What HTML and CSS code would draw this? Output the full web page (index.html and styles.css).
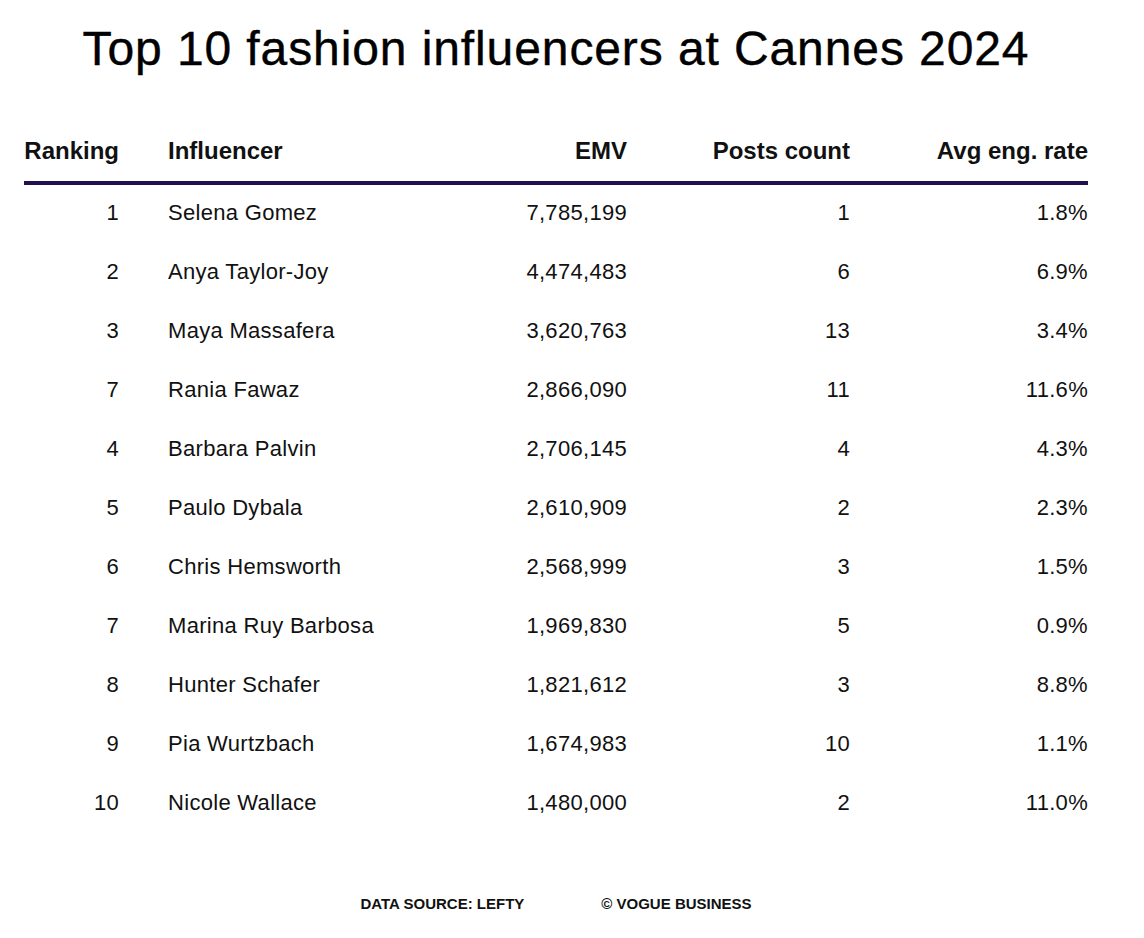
FILE: index.html
```html
<!DOCTYPE html>
<html lang="en">
<head>
<meta charset="utf-8">
<title>Top 10 fashion influencers at Cannes 2024</title>
<link rel="stylesheet" href="styles.css">
</head>
<body>
<div class="page">
  <h1 class="title">Top 10 fashion influencers at Cannes 2024</h1>
  <div class="table">
    <div class="row head">
      <div class="c rank">Ranking</div>
      <div class="c name">Influencer</div>
      <div class="c num">EMV</div>
      <div class="c num">Posts count</div>
      <div class="c num">Avg eng. rate</div>
    </div>
    <div class="body">
      <div class="row"><div class="c rank">1</div><div class="c name">Selena Gomez</div><div class="c num">7,785,199</div><div class="c num">1</div><div class="c num">1.8%</div></div>
      <div class="row"><div class="c rank">2</div><div class="c name">Anya Taylor-Joy</div><div class="c num">4,474,483</div><div class="c num">6</div><div class="c num">6.9%</div></div>
      <div class="row"><div class="c rank">3</div><div class="c name">Maya Massafera</div><div class="c num">3,620,763</div><div class="c num">13</div><div class="c num">3.4%</div></div>
      <div class="row"><div class="c rank">7</div><div class="c name">Rania Fawaz</div><div class="c num">2,866,090</div><div class="c num">11</div><div class="c num">11.6%</div></div>
      <div class="row"><div class="c rank">4</div><div class="c name">Barbara Palvin</div><div class="c num">2,706,145</div><div class="c num">4</div><div class="c num">4.3%</div></div>
      <div class="row"><div class="c rank">5</div><div class="c name">Paulo Dybala</div><div class="c num">2,610,909</div><div class="c num">2</div><div class="c num">2.3%</div></div>
      <div class="row"><div class="c rank">6</div><div class="c name">Chris Hemsworth</div><div class="c num">2,568,999</div><div class="c num">3</div><div class="c num">1.5%</div></div>
      <div class="row"><div class="c rank">7</div><div class="c name">Marina Ruy Barbosa</div><div class="c num">1,969,830</div><div class="c num">5</div><div class="c num">0.9%</div></div>
      <div class="row"><div class="c rank">8</div><div class="c name">Hunter Schafer</div><div class="c num">1,821,612</div><div class="c num">3</div><div class="c num">8.8%</div></div>
      <div class="row"><div class="c rank">9</div><div class="c name">Pia Wurtzbach</div><div class="c num">1,674,983</div><div class="c num">10</div><div class="c num">1.1%</div></div>
      <div class="row"><div class="c rank">10</div><div class="c name">Nicole Wallace</div><div class="c num">1,480,000</div><div class="c num">2</div><div class="c num">11.0%</div></div>
    </div>
  </div>
  <div class="footer">
    <span>DATA SOURCE: LEFTY</span>
    <span>© VOGUE BUSINESS</span>
  </div>
</div>
</body>
</html>
```
FILE: styles.css
```css
html, body {
  margin: 0;
  padding: 0;
  background: #ffffff;
}
body {
  font-family: "Liberation Sans", Arial, sans-serif;
  color: #111111;
}
.page {
  width: 1064px;
  margin-left: 24px;
}
.title {
  margin: 20px 0 0 0;
  height: 58px;
  line-height: 58px;
  font-size: 48px;
  font-weight: 400;
  letter-spacing: 0.9px;
  text-align: center;
  color: #000000;
  -webkit-text-stroke: 0.4px #000000;
}
.table {
  margin-top: 43px;
}
.row {
  display: grid;
  grid-template-columns: 144px 300px 159px 223px 238px;
  height: 59px;
  align-items: center;
  font-size: 22px;
  letter-spacing: 0.3px;
}
.row.head {
  height: 60px;
  font-size: 24px;
  font-weight: 700;
  letter-spacing: 0;
  border-bottom: 4px solid #23104f;
  box-sizing: content-box;
}
.body {
  margin-top: -2px;
}
.c {
  white-space: nowrap;
}
.rank {
  text-align: right;
  padding-right: 49px;
}
.name {
  text-align: left;
}
.num {
  text-align: right;
}
.footer {
  display: flex;
  justify-content: center;
  gap: 77px;
  margin-top: 62px;
  line-height: 20px;
  font-size: 15px;
  font-weight: 700;
  color: #111111;
}
```
